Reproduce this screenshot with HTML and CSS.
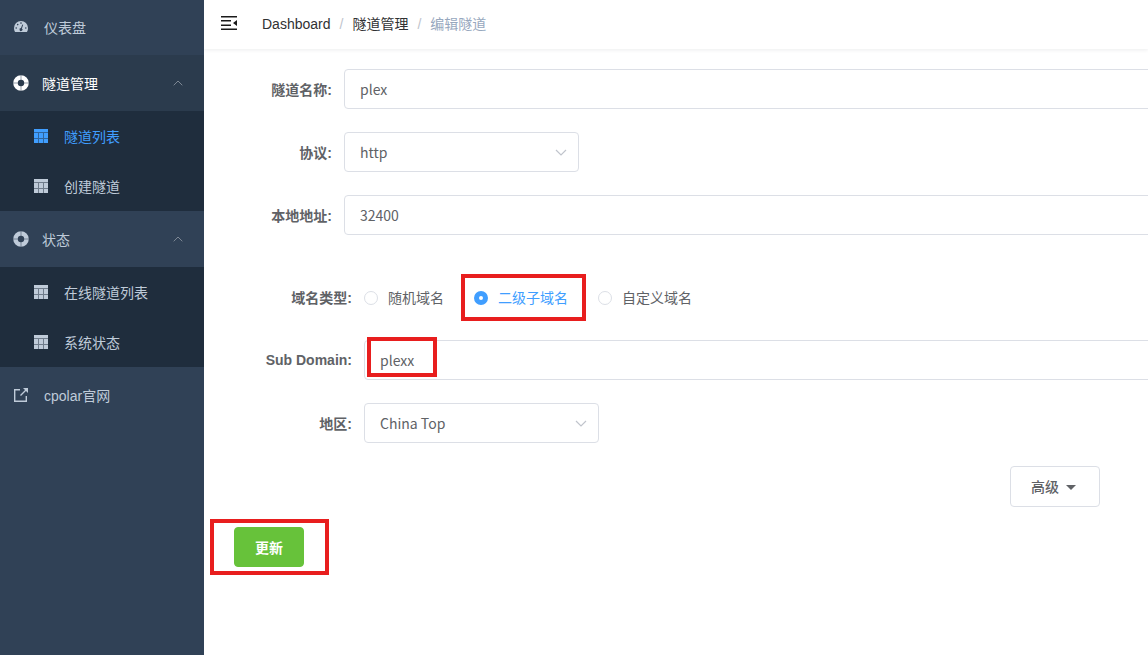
FILE: index.html
```html
<!DOCTYPE html>
<html lang="zh-CN">
<head>
    <meta charset="UTF-8">
    <meta name="viewport" content="width=device-width, initial-scale=1.0">
    <title>编辑隧道 - cpolar</title>
    <link rel="stylesheet" href="styles.css">
</head>
<body>
    <!-- icons used more than once -->
    <svg class="sprite" aria-hidden="true">
        <symbol id="icon-table" viewBox="0 0 14 14">
            <path d="M0 0h14v3H0zM0 4h4v5H0zM5 4h4v5H5zM10 4h4v5h-4zM0 10h4v4H0zM5 10h4v4H5zM10 10h4v4h-4z"/>
            <path d="M0 3h14v1H0zM4 4h1v10H4zM9 4h1v10H9zM0 9h14v1H0z" opacity=".5"/>
        </symbol>
        <symbol id="icon-ring" viewBox="0 0 16 16">
            <circle cx="8" cy="8" r="5.500" fill="none" stroke="currentColor" stroke-width="4.600"/>
            <path d="M8 0v5M8 11v5M0 8h5M11 8h5" stroke="#304156" stroke-width="1" opacity=".5"/>
        </symbol>
        <symbol id="icon-up" viewBox="0 0 10 6">
            <path d="M.7 5.300L5 1l4.300 4.300" fill="none" stroke="currentColor"/>
        </symbol>
        <symbol id="icon-down" viewBox="0 0 12 7">
            <path d="M1 1l5 5 5-5" fill="none" stroke="currentColor" stroke-width="1.200"/>
        </symbol>
    </svg>

    <div class="app">
        <nav class="sidebar">
            <a href="#" class="menu-item first">
                <svg class="icon" viewBox="0 0 14 14">
                    <path fill-rule="evenodd" d="M1.200 12C.4 11 0 9.500 0 8a7 7 0 0 1 14 0c0 1.500-.4 3-1.200 4zM2.200 7.200a.8.8 0 1 0 .01 1.600.8.8 0 0 0 0-1.600zM3.700 3.800a.8.8 0 1 0 .01 1.600.8.800 0 0 0 0-1.600zM7 2.300a.8.8 0 1 0 .01 1.600.8.8 0 0 0 0-1.600zM11.800 7.200a.8.8 0 1 0 .01 1.600.8.8 0 0 0 0-1.600zM8.300 4.500L7 8.100a1.500 1.500 0 1 0 .9.300l1.300-3.600z"/>
                </svg>
                <span>仪表盘</span>
            </a>

            <a href="#" class="menu-item group open">
                <svg class="icon"><use href="#icon-ring"/></svg>
                <span>隧道管理</span>
                <svg class="arrow"><use href="#icon-up"/></svg>
            </a>
            <div class="submenu">
                <a href="#" class="active"><svg class="icon"><use href="#icon-table"/></svg>隧道列表</a>
                <a href="#"><svg class="icon"><use href="#icon-table"/></svg>创建隧道</a>
            </div>

            <a href="#" class="menu-item group">
                <svg class="icon"><use href="#icon-ring"/></svg>
                <span>状态</span>
                <svg class="arrow"><use href="#icon-up"/></svg>
            </a>
            <div class="submenu">
                <a href="#"><svg class="icon"><use href="#icon-table"/></svg>在线隧道列表</a>
                <a href="#"><svg class="icon"><use href="#icon-table"/></svg>系统状态</a>
            </div>

            <a href="#" class="menu-item">
                <svg class="icon" viewBox="0 0 14 14">
                    <path d="M6 1.700H.7v11.600h11.600V8M6.500 7.500l5.500-5.500" fill="none" stroke="currentColor" stroke-width="1.400"/>
                    <path d="M9 0h5v5z"/>
                </svg>
                <span>cpolar官网</span>
            </a>
        </nav>

        <main class="main">
            <header class="navbar">
                <button type="button" class="hamburger" aria-label="收起菜单">
                    <svg viewBox="0 0 16 14">
                        <path d="M0 0h16v1.600H0zM0 4h10v1.600H0zM0 8.400h10V10H0zM0 12.400h16V14H0zM16 4v6l-4-3z"/>
                    </svg>
                </button>
                <div class="breadcrumb">
                    <a href="#">Dashboard</a><i>/</i><a href="#">隧道管理</a><i>/</i><span>编辑隧道</span>
                </div>
            </header>

            <form class="form">
                <div class="form-item">
                    <label for="name">隧道名称:</label>
                    <input type="text" id="name" value="plex">
                </div>
                <div class="form-item">
                    <label for="proto">协议:</label>
                    <div class="select">
                        <select id="proto"><option>http</option></select>
                        <svg><use href="#icon-down"/></svg>
                    </div>
                </div>
                <div class="form-item">
                    <label for="addr">本地地址:</label>
                    <input type="text" id="addr" value="32400">
                </div>

                <div class="domain">
                    <div class="form-item" role="radiogroup" aria-labelledby="type-label">
                        <span class="label" id="type-label">域名类型:</span>
                        <label class="radio"><input type="radio" name="type"><span>随机域名</span></label>
                        <label class="radio mark mark-radio"><input type="radio" name="type" checked><span>二级子域名</span></label>
                        <label class="radio"><input type="radio" name="type"><span>自定义域名</span></label>
                    </div>
                    <div class="form-item">
                        <label for="sub">Sub Domain:</label>
                        <div class="field mark mark-input">
                            <input type="text" id="sub" value="plexx">
                        </div>
                    </div>
                    <div class="form-item">
                        <label for="region">地区:</label>
                        <div class="select">
                            <select id="region"><option>China Top</option></select>
                            <svg><use href="#icon-down"/></svg>
                        </div>
                    </div>
                </div>

                <div class="more">
                    <button type="button" class="btn">高级<span class="caret"></span></button>
                </div>
                <div class="submit mark mark-submit">
                    <button type="button" class="btn btn-success">更新</button>
                </div>
            </form>
        </main>
    </div>
</body>
</html>
```

FILE: styles.css
```css
*, *::after {
    box-sizing: border-box;
}
body {
    margin: 0;
    font-family: "Liberation Sans", "Noto Sans CJK SC", sans-serif;
    font-size: 14px;
    color: #606266;
    background-color: #fff;
}
a {
    color: inherit;
    text-decoration: none;
}
.sprite {
    position: absolute;
    width: 0;
    height: 0;
}
.app {
    display: flex;
    min-height: 100vh;
}

/* sidebar */
.sidebar {
    flex: 0 0 204px;
    background-color: #304156;
    color: #bfcbd9;
}
.icon {
    width: 14px;
    height: 14px;
    fill: currentColor;
}
.menu-item {
    display: flex;
    align-items: center;
    gap: 16px;
    height: 56px;
    padding: 0 21px 0 14px;
}
.menu-item.first {
    height: 55px;
    padding-bottom: 1px;
}
.menu-item.group {
    gap: 13px;
    padding-left: 13px;
}
.menu-item.group .icon {
    width: 16px;
    height: 16px;
}
.menu-item.open {
    background-color: #2b3b4d;
    color: #fff;
}
.arrow {
    width: 10px;
    height: 6px;
    margin-left: auto;
    color: #7d8794;
}
.submenu {
    background-color: #1f2d3d;
}
.submenu a {
    display: flex;
    align-items: center;
    gap: 16px;
    height: 50px;
    padding-left: 34px;
}
.submenu .active {
    color: #409eff;
}

/* top bar */
.main {
    flex: 1;
    min-width: 0;
    overflow: hidden;
}
.navbar {
    display: flex;
    align-items: center;
    gap: 25px;
    height: 49px;
    padding: 0 0 3px 17px;
    box-shadow: 0 1px 4px rgba(0, 21, 41, 0.08);
}
.hamburger {
    display: flex;
    padding: 0;
    border: none;
    background: none;
    cursor: pointer;
}
.hamburger svg {
    width: 16px;
    height: 14px;
    fill: #1a1a1a;
}
.breadcrumb {
    color: #97a8be;
}
.breadcrumb a {
    color: #303133;
}
.breadcrumb i {
    margin: 0 9px;
    color: #c0c4cc;
    font-style: normal;
}

/* form */
.form {
    padding: 20px 0 20px 30px;
}
.form-item {
    display: flex;
    align-items: center;
    height: 40px;
    margin-bottom: 23px;
    margin-right: -20px;
}
.form-item > label:first-child, .label {
    flex: 0 0 110px;
    padding: 0 12px 1px 0;
    text-align: right;
    font-weight: bold;
}
.domain {
    padding: 19px 0 0 20px;
}
input[type="text"], select {
    width: 100%;
    height: 40px;
    padding: 0 15px;
    border: 1px solid #dcdfe6;
    border-radius: 4px;
    background-color: #fff;
    color: #606266;
    font-family: "Noto Sans CJK SC", sans-serif;
    font-size: 14px;
    appearance: none;
}
.field {
    flex: 1;
}
.select {
    position: relative;
    width: 235px;
}
.select svg {
    position: absolute;
    top: 17px;
    right: 12px;
    width: 12px;
    height: 7px;
    color: #c0c4cc;
    pointer-events: none;
}
.radio {
    display: flex;
    align-items: center;
    gap: 10px;
    margin-right: 30px;
    padding-top: 2px;
}
.radio span {
    padding-bottom: 2px;
}
.radio input {
    appearance: none;
    width: 14px;
    height: 14px;
    margin: 0;
    border: 1px solid #dcdfe6;
    border-radius: 50%;
}
.radio input:checked {
    border: 5px solid #409eff;
}
.radio input:checked + span {
    color: #409eff;
}
.more {
    display: flex;
    justify-content: flex-end;
    padding-right: 48px;
    margin-bottom: 20px;
}
.btn {
    height: 41px;
    padding: 0 23px 2px 20px;
    border: 1px solid #dcdfe6;
    border-radius: 4px;
    background-color: #fff;
    color: #606266;
    font-family: inherit;
    font-size: 14px;
    font-weight: 500;
    cursor: pointer;
}
.caret {
    display: inline-block;
    margin-left: 7px;
    border: 5px solid transparent;
    border-top-color: #606266;
    border-bottom: none;
    vertical-align: middle;
}
.btn-success {
    width: 70px;
    height: 40px;
    padding: 0;
    border-color: #67c23a;
    background-color: #67c23a;
    color: #fff;
    font-weight: bold;
}
.submit {
    width: 70px;
}

/* red highlight frames */
.mark {
    position: relative;
}
.mark::after {
    content: "";
    position: absolute;
    border: 4px solid #e81e1e;
    pointer-events: none;
}
.mark-radio::after {
    inset: -11px -18px -12px -13px;
}
.mark-input::after {
    top: -3px;
    left: 3px;
    width: 70px;
    height: 40px;
}
.mark-submit::after {
    inset: -8px -25px -8px -24px;
}
```
